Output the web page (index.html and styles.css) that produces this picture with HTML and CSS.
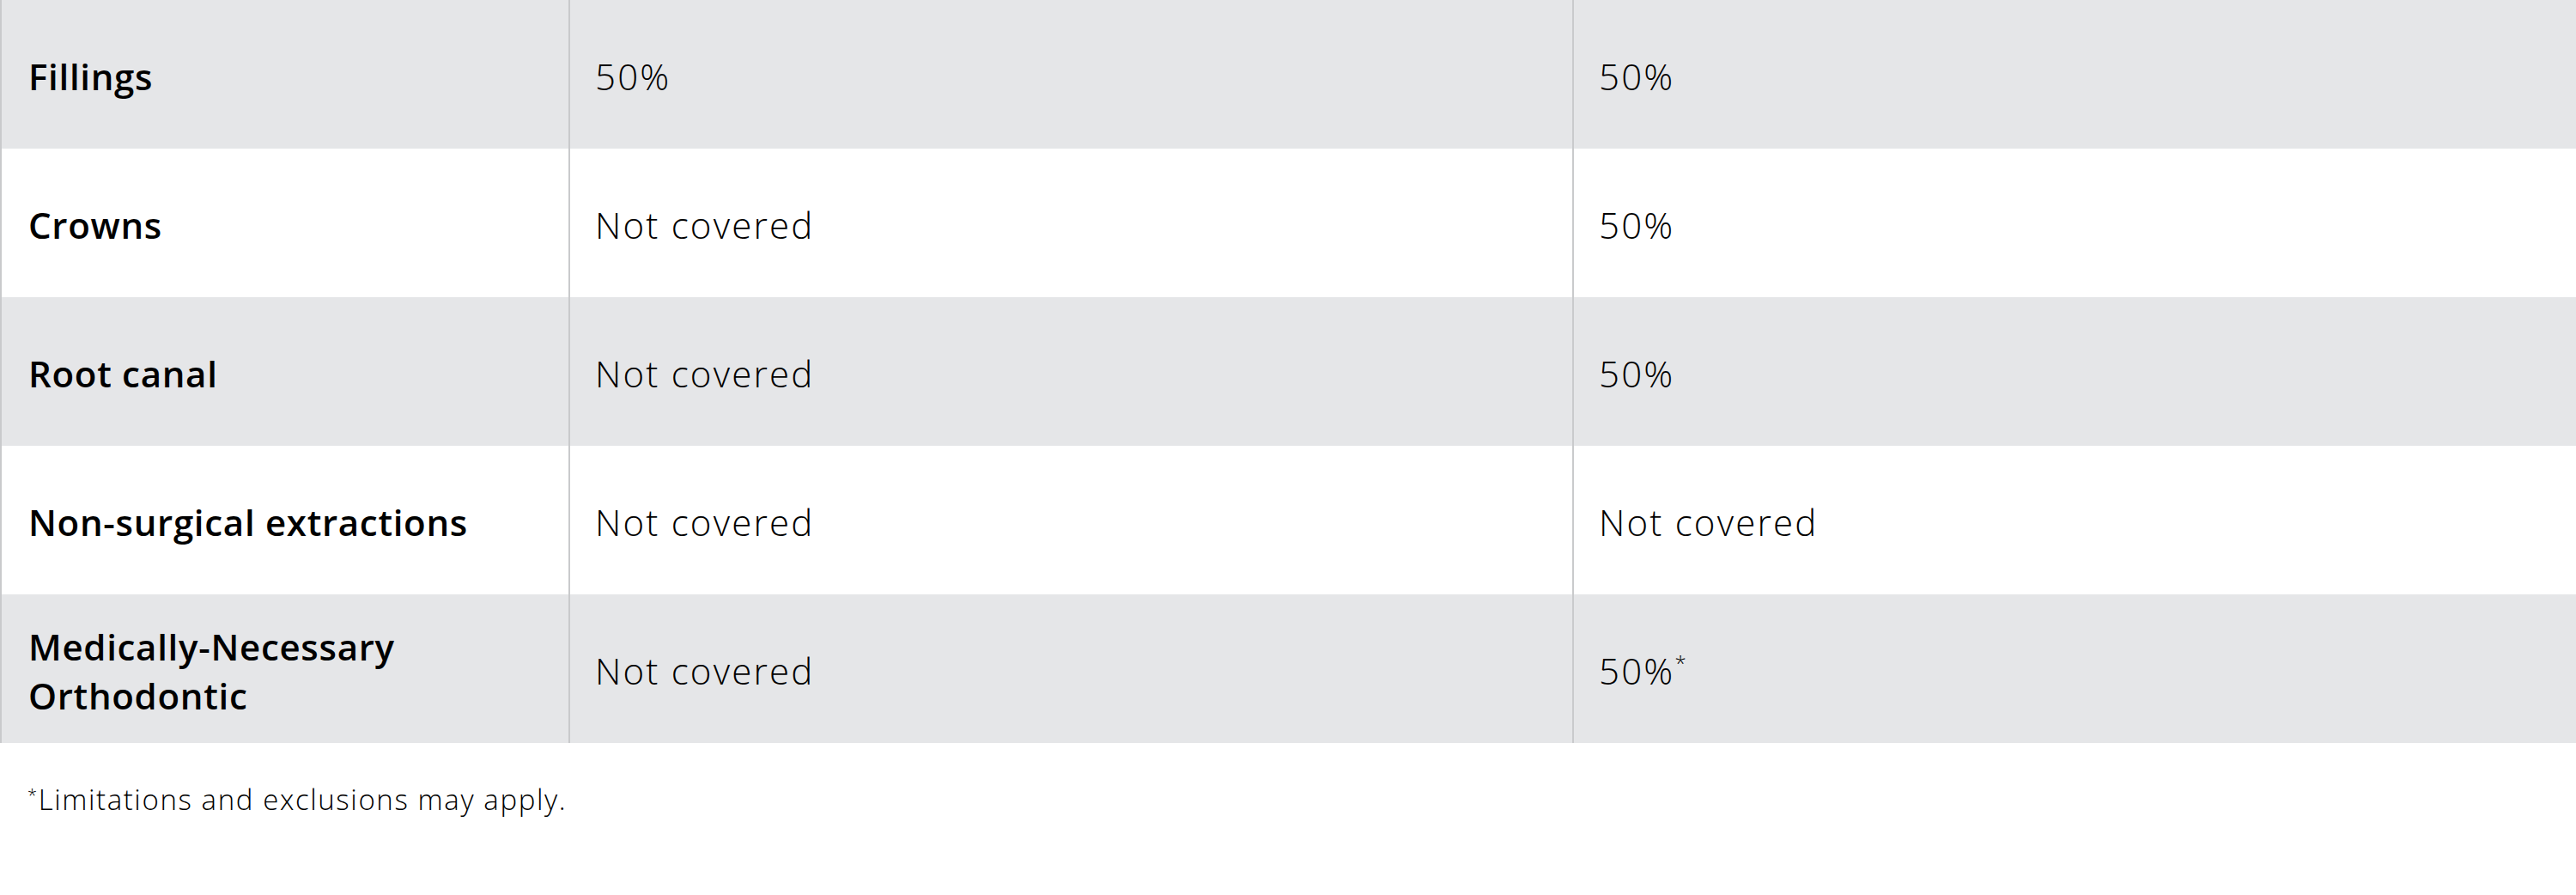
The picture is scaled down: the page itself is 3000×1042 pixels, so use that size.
FILE: index.html
```html
<!DOCTYPE html>
<html lang="en">
<head>
<meta charset="utf-8">
<title>Coverage</title>
<link rel="stylesheet" href="styles.css">
</head>
<body>
<div class="wrap">
  <table class="coverage">
    <colgroup>
      <col class="c-label">
      <col class="c-plan">
      <col class="c-plan">
    </colgroup>
    <tbody>
      <tr class="shade">
        <th>Fillings</th>
        <td>50%</td>
        <td>50%</td>
      </tr>
      <tr>
        <th>Crowns</th>
        <td>Not covered</td>
        <td>50%</td>
      </tr>
      <tr class="shade">
        <th>Root canal</th>
        <td>Not covered</td>
        <td>50%</td>
      </tr>
      <tr>
        <th>Non-surgical extractions</th>
        <td>Not covered</td>
        <td>Not covered</td>
      </tr>
      <tr class="shade">
        <th><span class="ln">Medically-Necessary</span><span class="ln">Orthodontic</span></th>
        <td>Not covered</td>
        <td>50%<sup>*</sup></td>
      </tr>
    </tbody>
  </table>
  <p class="note"><sup>*</sup>Limitations and exclusions may apply.</p>
</div>
</body>
</html>
```
FILE: styles.css
```css
html, body {
  margin: 0;
  padding: 0;
  background: #ffffff;
}
body {
  font-family: "Open Sans", Lato, sans-serif;
  color: #000;
}
.wrap {
  width: 3000px;
}
.coverage {
  width: 3000px;
  border-collapse: collapse;
  table-layout: fixed;
}
.c-label { width: 662px; }
.c-plan { width: 1169px; }
.coverage tr {
  height: 173px;
}
.coverage tr.shade {
  background: #e5e6e8;
}
.coverage th,
.coverage td {
  padding: 4px 30px 0 29px;
  vertical-align: middle;
  text-align: left;
  font-size: 42px;
  line-height: 49px;
  border-left: 2px solid #c9cacc;
  border-right: 2px solid #c9cacc;
}
.coverage th {
  font-weight: 600;
  padding-left: 31px;
  letter-spacing: 0.7px;
}
.coverage td {
  font-weight: 300;
  letter-spacing: 2.2px;
}
.ln {
  display: block;
  line-height: 57px;
}
.coverage sup {
  font-size: 24px;
  vertical-align: 16px;
  line-height: 0;
}
.note {
  margin: 0;
  padding: 46px 0 0 32px;
  font-size: 33px;
  font-weight: 300;
  line-height: 40px;
  letter-spacing: 1.6px;
}
.note sup {
  font-size: 20px;
  vertical-align: 10px;
  line-height: 0;
}
```
